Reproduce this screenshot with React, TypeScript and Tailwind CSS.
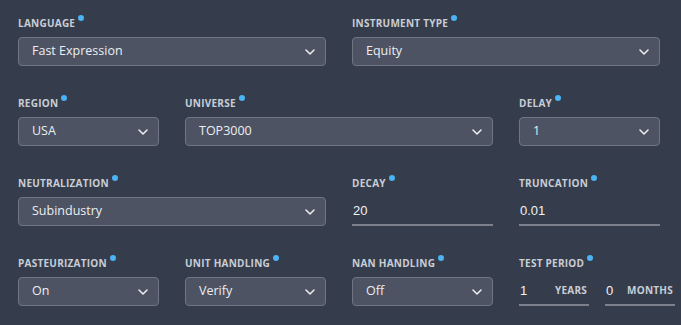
import type { ReactNode } from "react";

const sans = "font-['Open_Sans','Noto_Sans',sans-serif]";

function Label({ text }: { text: string }) {
  return (
    <div className="flex h-[14px] items-start">
      <span
        className={`${sans} text-[10px] leading-[14px] font-bold uppercase tracking-[0.25px] text-[#c9cdd5]`}
      >
        {text}
      </span>
      <span className="ml-[3px] mt-[-1px] h-[6px] w-[6px] rounded-full bg-[#4cb3f4]" />
    </div>
  );
}

function Chevron() {
  return (
    <svg width="10" height="6" viewBox="0 0 10 6" className="shrink-0">
      <polyline
        points="1,1 5,5 9,1"
        fill="none"
        stroke="#eef0f3"
        strokeWidth="1.5"
        strokeLinecap="round"
        strokeLinejoin="round"
      />
    </svg>
  );
}

function Select({ value }: { value: string }) {
  return (
    <div className="flex h-[29px] items-center justify-between rounded-[4px] border border-[#6f7584] bg-[#4d5362] pl-[13px] pr-[10px]">
      <span className={`${sans} text-[12.5px] text-[#eceef2]`}>{value}</span>
      <Chevron />
    </div>
  );
}

function Input({ value, suffix }: { value: string; suffix?: string }) {
  return (
    <div className="flex h-[29px] items-center justify-between border-b-2 border-[#7b808c] pl-[1px] pr-[2px]">
      <span className="font-['Liberation_Sans',Arial,sans-serif] text-[13px] text-[#f1f2f4]">
        {value}
      </span>
      {suffix && (
        <span
          className={`${sans} text-[10px] font-bold tracking-[0.25px] text-[#c9cdd5]`}
        >
          {suffix}
        </span>
      )}
    </div>
  );
}

function Field({
  label,
  span,
  children,
}: {
  label: string;
  span?: boolean;
  children: ReactNode;
}) {
  return (
    <div className={`flex flex-col gap-[7px] ${span ? "col-span-2" : ""}`}>
      <Label text={label} />
      {children}
    </div>
  );
}

export default function App() {
  return (
    <div className="h-[325px] w-full overflow-hidden bg-[#353d4c] pl-[18px] pt-[16px]">
      <div className="grid grid-cols-[141px_141px_141px_141px] gap-x-[26px] gap-y-[30px]">
        <Field label="Language" span>
          <Select value="Fast Expression" />
        </Field>
        <Field label="Instrument type" span>
          <Select value="Equity" />
        </Field>

        <Field label="Region">
          <Select value="USA" />
        </Field>
        <Field label="Universe" span>
          <Select value="TOP3000" />
        </Field>
        <Field label="Delay">
          <Select value="1" />
        </Field>

        <Field label="Neutralization" span>
          <Select value="Subindustry" />
        </Field>
        <Field label="Decay">
          <Input value="20" />
        </Field>
        <Field label="Truncation">
          <Input value="0.01" />
        </Field>

        <Field label="Pasteurization">
          <Select value="On" />
        </Field>
        <Field label="Unit handling">
          <Select value="Verify" />
        </Field>
        <Field label="NaN handling">
          <Select value="Off" />
        </Field>
        <Field label="Test period">
          <div className="flex w-[156px] gap-[16px]">
            <div className="w-[70px]">
              <Input value="1" suffix="YEARS" />
            </div>
            <div className="w-[70px]">
              <Input value="0" suffix="MONTHS" />
            </div>
          </div>
        </Field>
      </div>
    </div>
  );
}
